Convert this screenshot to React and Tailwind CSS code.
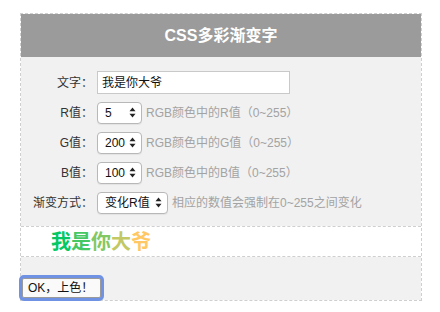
import React from "react";

const FONT = "font-['Liberation_Sans','Noto_Sans_CJK_SC',sans-serif]";

const Arrows = () => (
  <svg width="7" height="11" viewBox="0 0 7 11" className="shrink-0">
    <path d="M3.5 0.5 L6.5 4.2 L0.5 4.2 Z" fill="#222" />
    <path d="M3.5 10.5 L6.5 6.8 L0.5 6.8 Z" fill="#222" />
  </svg>
);

const FakeSelect = ({ value, width }) => (
  <div
    className={`${width} h-[22px] flex items-center justify-between pl-[7px] pr-[5px] bg-white border border-[#b8b8b8] rounded-[4px] text-[12px] text-[#111] shadow-[0_1px_1px_rgba(0,0,0,0.06)]`}
  >
    <span>{value}</span>
    <Arrows />
  </div>
);

const Row = ({ label, children }) => (
  <div className="flex items-center h-[23px]">
    <label className="w-[72px] text-right text-[12px] text-[#333]">
      {label}
    </label>
    <div className="flex items-center gap-[4px] ml-[4px]">{children}</div>
  </div>
);

const Hint = ({ children }) => (
  <span className="text-[12px] text-[#a3a3a3]">{children}</span>
);

export default function App() {
  const text = "我是你大爷";
  const chars = text.split("");

  return (
    <div className={`${FONT} bg-white w-[440px] h-[312px] pt-[13px]`}>
      <div className="ml-[20px] w-[402px] border border-dashed border-[#cfcfcf]">
        {/* header */}
        <div className="h-[43px] bg-[#9b9b9b] flex items-center justify-center">
          <h1 className="text-white font-bold text-[16px]">CSS多彩渐变字</h1>
        </div>

        {/* form */}
        <div className="bg-[#f1f1f1] pt-[14px] pb-[12px] flex flex-col gap-[7px]">
          <Row label="文字：">
            <div className="w-[193px] h-[23px] bg-white border border-[#c9c9c9] flex items-center px-[4px] text-[12px] text-[#111]">
              {text}
            </div>
          </Row>
          <Row label="R值：">
            <FakeSelect value="5" width="w-[45px]" />
            <Hint>RGB颜色中的R值（0~255）</Hint>
          </Row>
          <Row label="G值：">
            <FakeSelect value="200" width="w-[45px]" />
            <Hint>RGB颜色中的G值（0~255）</Hint>
          </Row>
          <Row label="B值：">
            <FakeSelect value="100" width="w-[45px]" />
            <Hint>RGB颜色中的B值（0~255）</Hint>
          </Row>
          <Row label="渐变方式：">
            <FakeSelect value="变化R值" width="w-[71px]" />
            <Hint>相应的数值会强制在0~255之间变化</Hint>
          </Row>
        </div>

        {/* preview */}
        <div className="h-[31px] bg-white border-y border-dashed border-[#cfcfcf] flex items-center pl-[30px]">
          {chars.map((c, i) => (
            <span
              key={i}
              className="text-[20px] font-bold leading-none"
              style={{
                color: `rgb(${Math.round(5 + (250 * i) / 4)}, 200, 100)`,
              }}
            >
              {c}
            </span>
          ))}
        </div>

        {/* footer */}
        <div className="bg-[#f1f1f1] pt-[18px] pb-[1px] pl-[1px]">
          <button className="h-[20px] w-[79px] text-left pl-[5px] text-[12px] text-[#111] bg-[#fafafa] border border-[#9a9a9a] rounded-[2px] ring-[3px] ring-[#6f92e4]">
            OK，上色！
          </button>
        </div>
      </div>
    </div>
  );
}
